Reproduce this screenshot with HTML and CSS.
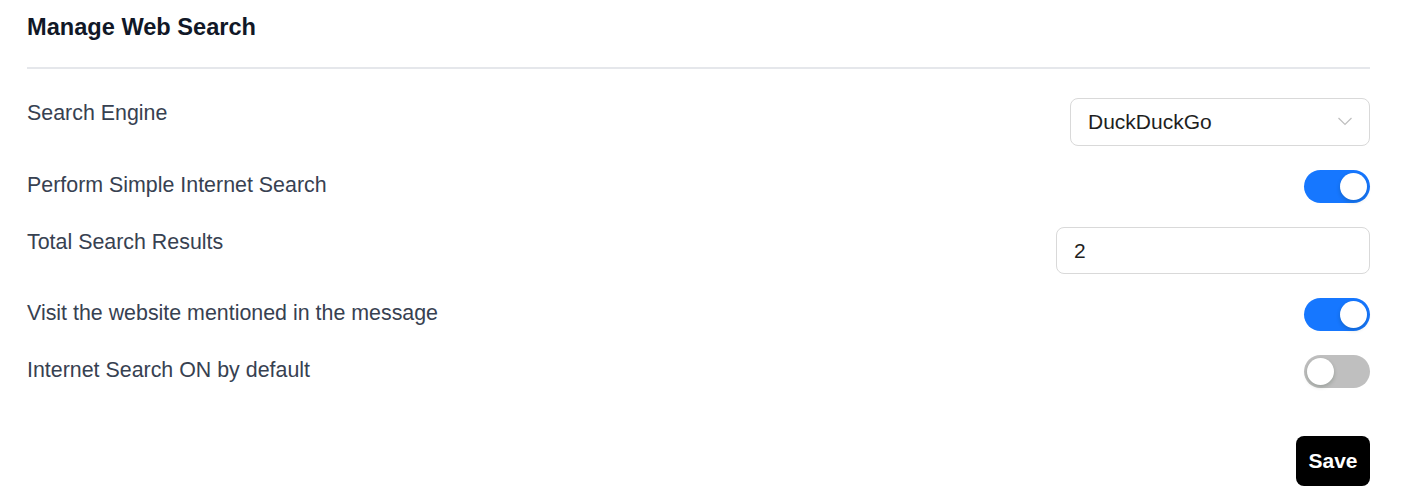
FILE: index.html
```html
<!DOCTYPE HTML>
<html lang="en-US">
<head>
    <title>Manage Web Search</title>
    <meta charset="UTF-8">
    <meta name="viewport" content="width=device-width, initial-scale=1"/>
    <link rel="stylesheet" href="styles.css">
</head>
<body>
<div class="panel">
    <h2 class="panel-title">Manage Web Search</h2>
    <div class="settings">
        <div class="setting-row">
            <span class="setting-label">Search Engine</span>
            <div class="select">
                <span>DuckDuckGo</span>
                <svg class="chevron" width="16" height="16" viewBox="0 0 16 16" fill="none">
                    <path d="M1.5 5l6.5 6.5L14.5 5" stroke="#bfbfbf" stroke-width="1.2"/>
                </svg>
            </div>
        </div>
        <div class="setting-row">
            <span class="setting-label">Perform Simple Internet Search</span>
            <div class="switch on"><span class="knob"></span></div>
        </div>
        <div class="setting-row">
            <span class="setting-label">Total Search Results</span>
            <div class="number-input">2</div>
        </div>
        <div class="setting-row">
            <span class="setting-label">Visit the website mentioned in the message</span>
            <div class="switch on"><span class="knob"></span></div>
        </div>
        <div class="setting-row">
            <span class="setting-label">Internet Search ON by default</span>
            <div class="switch"><span class="knob"></span></div>
        </div>
    </div>
    <div class="actions">
        <button class="save-btn">Save</button>
    </div>
</div>
</body>
</html>
```
FILE: styles.css
```css
* {
    box-sizing: border-box;
}

body {
    margin: 0;
    background: #fff;
    font-family: "Liberation Sans", Arial, sans-serif;
}

.panel {
    width: 1343px;
    margin-left: 27px;
    padding-top: 13px;
}

.panel-title {
    margin: 0;
    font-size: 23.6px;
    line-height: 28px;
    font-weight: 700;
    color: #111827;
    padding-bottom: 26px;
    border-bottom: 2px solid #e5e7eb;
}

.settings {
    display: flex;
    flex-direction: column;
    gap: 24px;
    margin-top: 29px;
}

.setting-row {
    display: flex;
    justify-content: space-between;
    align-items: flex-start;
}

.setting-label {
    padding-top: 1px;
    font-size: 21.4px;
    line-height: 28px;
    color: #374151;
}

.select {
    width: 300px;
    height: 48px;
    border: 1px solid #d9d9d9;
    border-radius: 8px;
    display: flex;
    align-items: center;
    justify-content: space-between;
    padding: 0 16px 0 17px;
    font-size: 21px;
    color: #1f1f1f;
}

.chevron {
    margin-top: -2px;
}

.number-input {
    width: 314px;
    height: 47px;
    border: 1px solid #d9d9d9;
    border-radius: 8px;
    display: flex;
    align-items: center;
    padding: 0 17px;
    font-size: 21px;
    color: #1f1f1f;
}

.switch {
    width: 66px;
    height: 33px;
    border-radius: 17px;
    background: #bfbfbf;
    display: flex;
    align-items: center;
    padding: 0 3px;
}

.switch.on {
    background: #1677ff;
    justify-content: flex-end;
}

.knob {
    width: 27px;
    height: 27px;
    border-radius: 50%;
    background: #fff;
    box-shadow: 0 2px 4px rgba(0, 35, 11, 0.2);
}

.actions {
    display: flex;
    justify-content: flex-end;
    margin-top: 48px;
}

.save-btn {
    width: 74px;
    height: 50px;
    border: 0;
    border-radius: 8px;
    background: #000;
    color: #fff;
    font-family: "Liberation Sans", Arial, sans-serif;
    font-size: 21px;
    font-weight: 700;
    padding: 0;
}
```
